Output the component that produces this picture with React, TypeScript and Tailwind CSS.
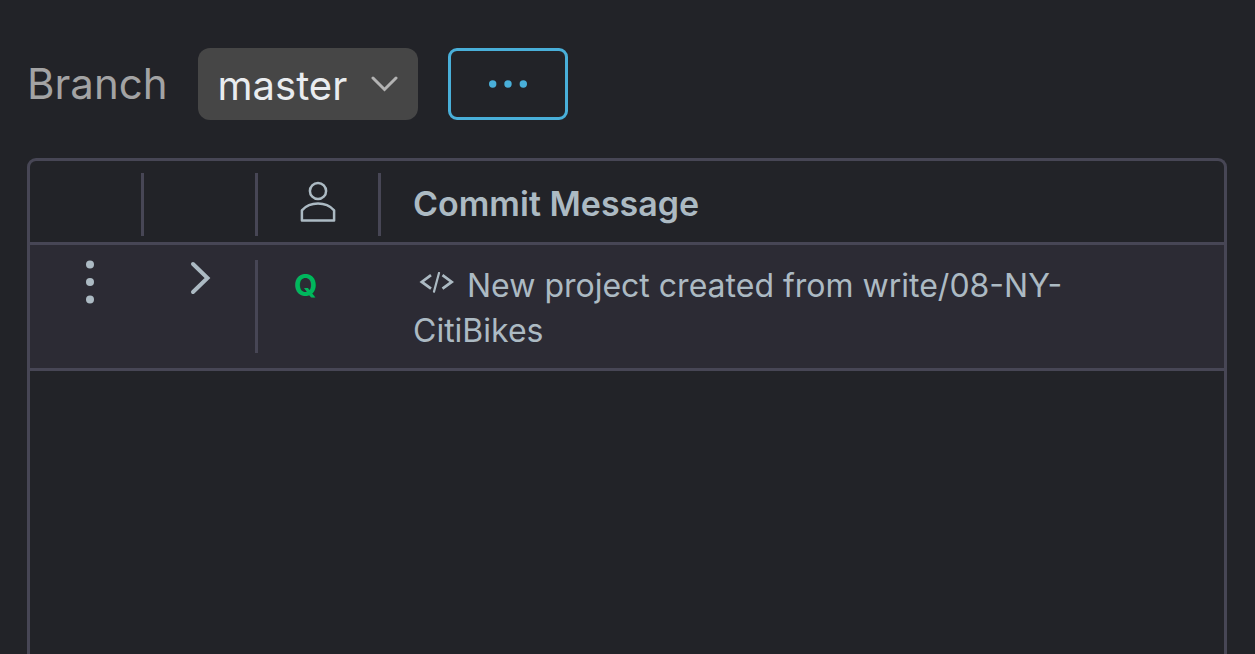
import type { ReactNode } from "react";

function DotsIcon({ vertical = false }: { vertical?: boolean }) {
  return vertical ? (
    <svg width="12" height="48" viewBox="0 0 12 48" fill="currentColor" aria-hidden="true">
      <circle cx="6" cy="6.5" r="4" />
      <circle cx="6" cy="24" r="4" />
      <circle cx="6" cy="41.5" r="4" />
    </svg>
  ) : (
    <svg width="40" height="8" viewBox="0 0 40 8" fill="currentColor" aria-hidden="true">
      <circle cx="4.7" cy="4" r="3.7" />
      <circle cx="20" cy="4" r="3.7" />
      <circle cx="35.3" cy="4" r="3.7" />
    </svg>
  );
}

function UserIcon() {
  return (
    <svg
      width="36"
      height="44"
      viewBox="0 0 36 44"
      fill="none"
      stroke="currentColor"
      strokeWidth="2.5"
      strokeLinejoin="round"
      aria-hidden="true"
    >
      <circle cx="18" cy="10" r="8.1" />
      <path d="M1.900 39.500V29.300C6 24.800 12 22.500 18 22.500S30 24.800 34.100 29.300V39.500Z" />
    </svg>
  );
}

function CodeIcon() {
  return (
    <svg
      width="36"
      height="25"
      viewBox="0 0 36 25"
      fill="none"
      stroke="currentColor"
      strokeWidth="2.7"
      className="mr-3 ml-1.5 inline-block align-baseline"
      aria-hidden="true"
    >
      <path d="M12 3.200 2.800 9.900 12 16.600M23.500 3.200 32.700 9.900 23.500 16.600" />
      <path d="M20 1 15 19.600" strokeWidth="2.2" strokeLinecap="round" />
    </svg>
  );
}

function HeaderCell({ label, children }: { label: string; children?: ReactNode }) {
  return (
    <th scope="col" aria-label={label} className="border-b-[3px] border-[#474655] pt-3 pb-1.5">
      <div className="flex h-[63px] items-start justify-center border-r-[3px] border-[#474655] pt-2">
        {children}
      </div>
    </th>
  );
}

export default function App() {
  return (
    <div className="flex h-screen flex-col overflow-hidden bg-[#222328] pt-12 pr-7 pl-[27px] font-['Inter',sans-serif] text-[#acbac3]">
      <div className="flex items-center">
        <label htmlFor="branch" className="text-[42px] leading-[72px] text-[#a3a3a4]">
          Branch
        </label>
        <div className="relative ml-[30px] w-[220px]">
          <select
            id="branch"
            defaultValue="master"
            className="h-[72px] w-full appearance-none rounded-xl bg-[#464646] pt-1 pr-14 pl-5 text-[40px] text-[#e9ecef]"
          >
            <option value="master">master</option>
          </select>
          <svg
            width="28"
            height="18"
            viewBox="0 0 28 18"
            fill="none"
            stroke="#b3b3b3"
            strokeWidth="3"
            strokeLinecap="round"
            className="pointer-events-none absolute top-7 right-5"
            aria-hidden="true"
          >
            <path d="M3 2 14.500 13.500 26 2" />
          </svg>
        </div>
        <button
          type="button"
          aria-label="Branch actions"
          className="ml-[30px] flex h-[72px] w-[120px] items-center justify-center rounded-[9px] border-[3px] border-[#49afd9] text-[#49afd9]"
        >
          <DotsIcon />
        </button>
      </div>

      <div className="mt-[38px] flex-1 overflow-hidden rounded-t-[9px] border-[3px] border-b-0 border-[#474655]">
        <table className="w-full table-fixed border-separate border-spacing-0">
          <colgroup>
            <col className="w-[114px]" />
            <col className="w-[114px]" />
            <col className="w-[123px]" />
            <col />
          </colgroup>
          <thead>
            <tr>
              <HeaderCell label="Actions" />
              <HeaderCell label="Details" />
              <HeaderCell label="Author">
                <UserIcon />
              </HeaderCell>
              <th
                scope="col"
                className="border-b-[3px] border-[#474655] pt-1 pl-8 text-left text-[34px] leading-10 font-semibold"
              >
                Commit Message
              </th>
            </tr>
          </thead>
          <tbody className="bg-[#2c2b34]">
            <tr>
              <td className="border-b-[3px] border-[#474655] pt-[13px] pl-1.5 align-top">
                <button type="button" aria-label="Commit actions" className="mx-auto flex w-12 justify-center">
                  <DotsIcon vertical />
                </button>
              </td>
              <td className="border-b-[3px] border-[#474655] py-[15px] align-top">
                <div className="flex h-[93px] items-start justify-center border-r-[3px] border-[#474655]">
                  <button type="button" aria-label="Expand commit" className="flex w-12 justify-center">
                    <svg
                      width="24"
                      height="36"
                      viewBox="0 0 24 36"
                      fill="none"
                      stroke="currentColor"
                      strokeWidth="4"
                      strokeLinecap="round"
                      aria-hidden="true"
                    >
                      <path d="M5 4 19.500 18 5 32" />
                    </svg>
                  </button>
                </div>
              </td>
              <td className="border-b-[3px] border-[#474655] pt-[18px] pl-9 align-top text-[30px] leading-[45px] font-bold text-[#00b75d]">
                Q
              </td>
              <td className="border-b-[3px] border-[#474655] pt-[18px] pr-20 pl-8 align-top text-[32px] leading-[45px]">
                <CodeIcon />
                New project created from write/08-NY-CitiBikes
              </td>
            </tr>
          </tbody>
        </table>
      </div>
    </div>
  );
}
